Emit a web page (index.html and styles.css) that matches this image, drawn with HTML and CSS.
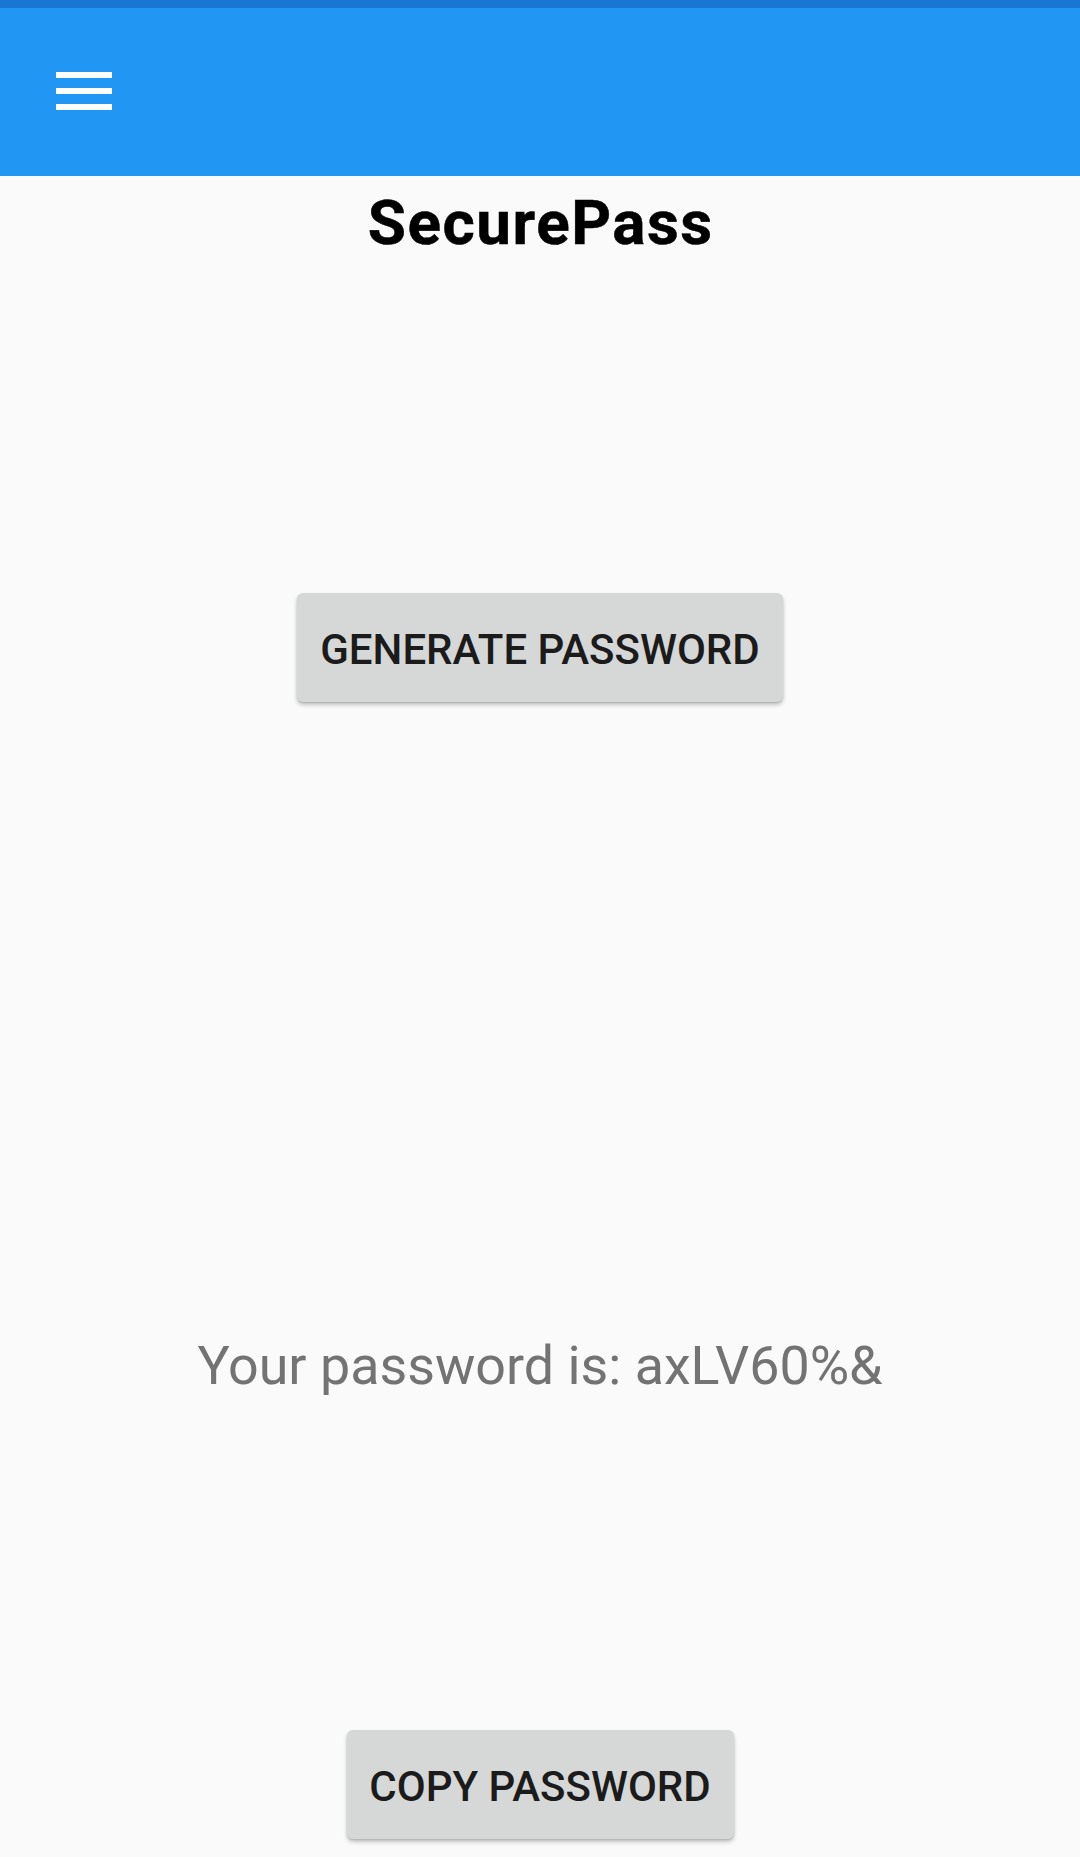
FILE: index.html
```html
<!DOCTYPE html>
<html lang="en">
<head>
<meta charset="utf-8">
<title>SecurePass</title>
<link rel="stylesheet" href="styles.css">
</head>
<body>
<div class="app">
  <div class="status-bar"></div>
  <header class="toolbar">
    <button class="menu-btn" aria-label="Menu">
      <span class="bar"></span>
      <span class="bar"></span>
      <span class="bar"></span>
    </button>
  </header>
  <main class="content">
    <h1 class="title">SecurePass</h1>
    <button class="raised-btn generate-btn">GENERATE PASSWORD</button>
    <p class="result">Your password is: axLV60%&amp;</p>
    <button class="raised-btn copy-btn">COPY PASSWORD</button>
  </main>
</div>
</body>
</html>
```
FILE: styles.css
```css
html, body {
  margin: 0;
  padding: 0;
  background: #fafafa;
  font-family: Roboto, "Noto Sans", "Liberation Sans", sans-serif;
}
body {
  width: 1080px;
  height: 1857px;
  overflow: hidden;
}
.app {
  display: flex;
  flex-direction: column;
}
.status-bar {
  height: 8px;
  background: #1976d2;
}
.toolbar {
  height: 168px;
  background: #2196f3;
  display: flex;
  align-items: flex-start;
  padding-left: 56px;
  box-sizing: border-box;
}
.menu-btn {
  margin-top: 64px;
  padding: 0;
  border: 0;
  background: transparent;
  display: flex;
  flex-direction: column;
  gap: 10px;
}
.bar {
  display: block;
  width: 56px;
  height: 6px;
  background: #ffffff;
}
.content {
  display: flex;
  flex-direction: column;
  align-items: center;
}
.title {
  margin: 12px 0 0 0;
  padding-left: 1.5px;
  font-size: 62px;
  font-weight: 700;
  letter-spacing: 1.5px;
  -webkit-text-stroke: 0.5px #000000;
  color: #000000;
  line-height: 70px;
}
.raised-btn {
  font-family: Roboto, "Noto Sans", "Liberation Sans", sans-serif;
  font-weight: 500;
  font-size: 42px;
  line-height: 49px;
  color: #1b1b1b;
  background: #d6d7d7;
  border: 0;
  border-radius: 6px;
  box-shadow: 0 3px 4px rgba(0, 0, 0, 0.22), 0 1px 2px rgba(0, 0, 0, 0.12);
  padding: 32px 0 28px 0;
  text-align: center;
}
.generate-btn {
  margin-top: 335px;
  width: 486px;
}
.result {
  margin: 632px 0 0 0;
  font-size: 53.8px;
  line-height: 63px;
  color: #737373;
}
.copy-btn {
  margin-top: 333px;
  width: 387px;
}
```
